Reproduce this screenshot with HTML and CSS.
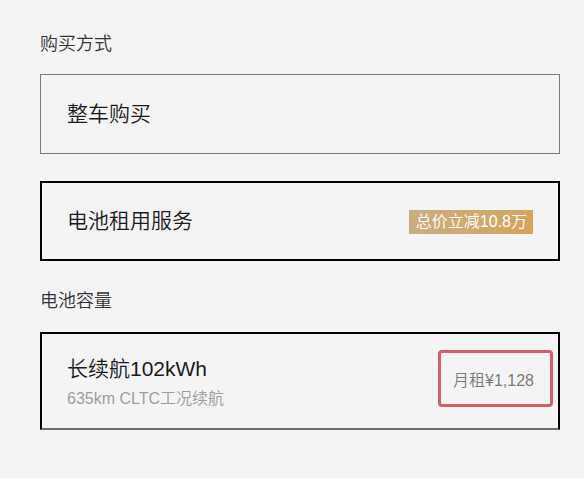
FILE: index.html
```html
<!DOCTYPE html>
<html lang="zh-CN">
<head>
<meta charset="utf-8">
<title>购买方式</title>
<link rel="stylesheet" href="styles.css">
</head>
<body>
<main class="page">
  <h2 class="group-label">购买方式</h2>
  <div class="option option-plain">
    <span class="option-title">整车购买</span>
  </div>
  <div class="option option-selected">
    <span class="option-title">电池租用服务</span>
    <span class="badge">总价立减10.8万</span>
  </div>

  <h2 class="group-label group-label-2">电池容量</h2>
  <div class="option option-selected option-tall">
    <div class="option-text">
      <span class="option-title">长续航102kWh</span>
      <span class="option-sub">635km CLTC工况续航</span>
    </div>
    <span class="price">月租¥1,128</span>
  </div>
</main>
</body>
</html>
```

FILE: styles.css
```css
html, body {
  margin: 0;
  padding: 0;
  background: #f4f4f5;
}
body {
  font-family: "Liberation Sans", "Noto Sans CJK SC", sans-serif;
  font-weight: 350;
  color: #222;
}
.page {
  padding: 32px 24px 0 40px;
  display: flex;
  flex-direction: column;
}
.group-label {
  margin: 0 0 17px 0;
  font-size: 18px;
  line-height: 25px;
  font-weight: 350;
  color: #333338;
}
.group-label-2 {
  margin-top: 28px;
  margin-bottom: 19px;
  line-height: 24px;
}
.option {
  box-sizing: border-box;
  height: 80px;
  display: flex;
  align-items: center;
  justify-content: space-between;
  padding: 0 25px 0 26px;
}
.option + .option {
  margin-top: 27px;
}
.option-plain {
  border: 1px solid #7b7b7b;
  padding-left: 26px;
}
.option-selected {
  border: 2px solid #000;
  padding-left: 25px;
}
.option-tall {
  height: 98px;
  border-bottom-color: #6f6f6f;
  padding-right: 5px;
}
.option-title {
  font-size: 21px;
  line-height: 30px;
  color: #1a1a1a;
}
.option-text {
  display: flex;
  flex-direction: column;
  margin-top: 2px;
}
.option-sub {
  font-size: 16px;
  line-height: 22px;
  margin-top: 4px;
  color: #9c9ca3;
}
.badge {
  font-size: 16px;
  line-height: 24px;
  padding: 0 6px 0 7px;
  color: #fff;
  background: linear-gradient(90deg, #c9ad82 0%, #d1a86c 60%, #d6a45c 100%);
  margin-top: 1px;
}
.price {
  box-sizing: border-box;
  height: 57px;
  display: flex;
  align-items: center;
  padding: 0 16px 0 12px;
  border: 3px solid #d65e69;
  border-radius: 4px;
  font-size: 16px;
  color: #7a7a7a;
  margin-top: -5px;
}
```
